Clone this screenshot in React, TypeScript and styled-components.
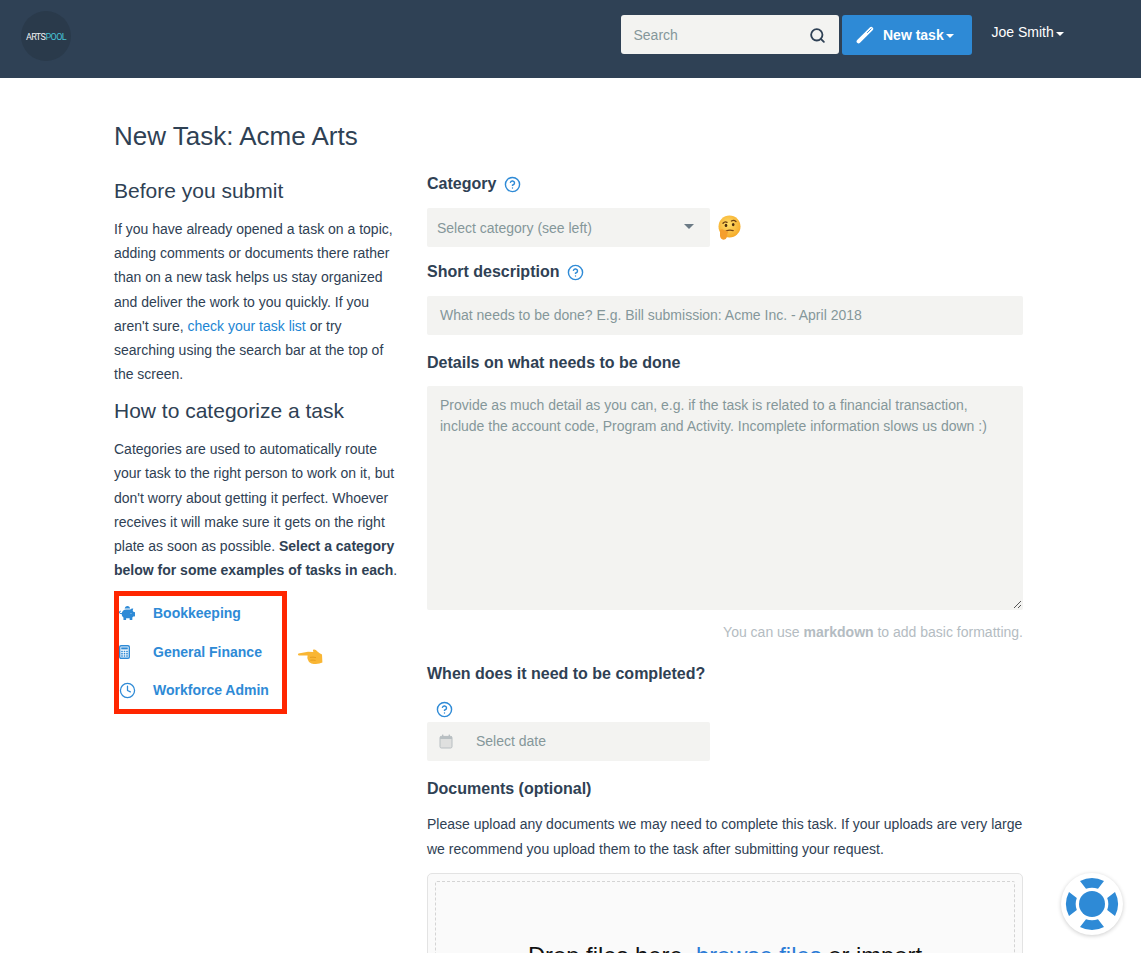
import React from "react";
import styled, { createGlobalStyle } from "styled-components";
import { CircleHelp, Clock, Search } from "lucide-react";
import { FaPiggyBank } from "react-icons/fa";

const Global = createGlobalStyle`
  html, body { margin: 0; padding: 0; height: 953px; overflow: hidden; background: #fff; }
  body { font-family: "Liberation Sans", Arial, sans-serif; color: #2f4154; font-size: 14px; }
  * { box-sizing: border-box; }
`;

const Page = styled.div`
  height: 953px;
  overflow: hidden;
`;

const Navbar = styled.header`
  height: 78px;
  background: #2f4155;
  display: flex;
  align-items: flex-start;
  padding: 11px 0 0 21px;
`;

const LogoMark = styled.div`
  width: 50px;
  height: 50px;
  border-radius: 50%;
  background: #2a3a4b;
  display: flex;
  align-items: center;
  justify-content: center;
  font-family: "Roboto", sans-serif;
  font-size: 9px;
  letter-spacing: -0.55px;
  color: #eef0f2;
  padding-top: 1px;
`;

const LogoAccent = styled.span`
  color: #48c3d6;
`;

const NavRight = styled.div`
  margin-left: auto;
  display: flex;
  align-items: flex-start;
  padding-top: 4px;
`;

const SearchBox = styled.div`
  width: 218px;
  height: 39px;
  background: #f3f3f1;
  border-radius: 3px;
  display: flex;
  align-items: center;
  justify-content: space-between;
  padding: 1px 13px 0 12.5px;
  color: #85979a;
  font-size: 14px;
  margin-right: 3px;
  svg { color: #2f4155; }
`;

const NewTask = styled.div`
  width: 130px;
  height: 40px;
  background: #2e8ad6;
  border-radius: 3px;
  display: flex;
  align-items: center;
  padding: 0 0 0 14px;
  color: #fff;
  font-weight: 700;
  font-size: 14px;
  svg { margin-right: 9px; }
`;

const Caret = styled.span`
  display: inline-block;
  width: 0;
  height: 0;
  margin-left: 2px;
  margin-top: 2px;
  border-left: 4.5px solid transparent;
  border-right: 4.5px solid transparent;
  border-top: 4px solid currentColor;
  vertical-align: middle;
`;

const UserMenu = styled.div`
  width: 169px;
  padding: 9px 0 0 19.5px;
  color: #fff;
  font-size: 14px;
  line-height: 16px;
`;

const Content = styled.main`
  padding: 0 118px 0 114px;
`;

const Title = styled.h1`
  margin: 0;
  padding-top: 43px;
  height: 94px;
  font-size: 26px;
  line-height: 30px;
  font-weight: 400;
  color: #2f4154;
`;

const Columns = styled.div`
  display: grid;
  grid-template-columns: 283px 596px;
  column-gap: 30px;
  align-items: start;
`;

const LeftColumn = styled.section`
  padding-top: 4px;
`;

const SectionHeading = styled.h3<{ $top?: number }>`
  margin: ${(p) => p.$top ?? 0}px 0 0;
  font-size: 21px;
  line-height: 30px;
  font-weight: 400;
  color: #2f4154;
`;

const Paragraph = styled.p`
  margin: 0;
  padding-top: 11px;
  font-size: 14px;
  line-height: 24.17px;
  color: #2f4154;
  width: 290px;
`;

const TextLink = styled.a`
  color: #1c85d3;
`;

const ListRow = styled.div`
  display: flex;
  align-items: center;
  width: fit-content;
  margin-top: 9px;
`;

const CategoryBox = styled.div`
  width: 173px;
  height: 123px;
  border: 5px solid #ff2600;
  display: flex;
  flex-direction: column;
  gap: 4.5px;
`;

const CategoryItem = styled.div`
  height: 34px;
  display: flex;
  align-items: center;
  color: #2e8ad6;
  font-weight: 700;
  font-size: 14px;
`;

const CategoryIcon = styled.span`
  width: 34px;
  display: flex;
  justify-content: flex-start;
  color: #2e8ad6;
`;

const PointHand = styled.span`
  margin-left: 10px;
  margin-top: 7px;
  display: flex;
`;

const RightColumn = styled.section`
  display: flex;
  flex-direction: column;
`;

const Label = styled.div<{ $top: number }>`
  display: flex;
  align-items: center;
  gap: 8px;
  font-size: 16px;
  font-weight: 700;
  line-height: 20px;
  color: #2f4154;
  margin-top: ${(p) => p.$top}px;
  svg { color: #2e8ad6; }
`;

const SelectRow = styled.div`
  display: flex;
  align-items: center;
  margin-top: 14px;
`;

const SelectField = styled.div`
  width: 283px;
  height: 39px;
  background: #f3f3f1;
  border-radius: 2px;
  display: flex;
  align-items: center;
  justify-content: space-between;
  padding: 0 16px 0 10px;
  color: #85979a;
  font-size: 14px;
  margin-right: 7px;
`;

const SelectCaret = styled.span`
  width: 0;
  height: 0;
  margin-top: -2px;
  border-left: 5px solid transparent;
  border-right: 5px solid transparent;
  border-top: 5px solid #6b7a85;
`;

const TextInput = styled.div`
  height: 39px;
  margin-top: 14px;
  background: #f3f3f1;
  border-radius: 2px;
  display: flex;
  align-items: center;
  padding: 0 13px 1px;
  color: #85979a;
  font-size: 14px;
`;

const TextArea = styled.div`
  position: relative;
  height: 224px;
  margin-top: 13px;
  background: #f3f3f1;
  border-radius: 2px;
  padding: 9px 13px;
  color: #85979a;
  font-size: 14px;
  line-height: 21px;
`;

const Grip = styled.svg`
  position: absolute;
  right: 1px;
  bottom: 1px;
`;

const Hint = styled.div`
  margin-top: 14px;
  line-height: 16px;
  text-align: right;
  font-size: 14px;
  color: #b4bcc2;
`;

const HelpRow = styled.div`
  height: 16px;
  margin-top: 17px;
  padding-left: 8.5px;
  display: flex;
  align-items: center;
  svg { color: #2e8ad6; }
`;

const DateField = styled.div`
  width: 283px;
  height: 39px;
  margin-top: 5px;
  background: #f3f3f1;
  border-radius: 2px;
  display: flex;
  align-items: center;
  padding: 0 0 1px 12px;
  color: #85979a;
  font-size: 14px;
  svg { margin-right: 23px; }
`;

const BodyText = styled.p`
  margin: 13px 0 0;
  font-size: 14px;
  line-height: 24.5px;
  color: #2f4154;
  white-space: nowrap;
`;

const DropOuter = styled.div`
  margin-top: 12px;
  height: 200px;
  background: #fafafa;
  border: 1px solid #e3e3e3;
  border-radius: 5px;
  padding: 7px;
`;

const DropInner = styled.div`
  height: 180px;
  border: 1px dashed #d4d4d4;
  border-radius: 2px;
  padding-top: 60px;
  text-align: center;
  font-size: 23.8px;
  line-height: 28px;
  color: #111;
  white-space: nowrap;
`;

const DropLink = styled.span`
  color: #2b7bd6;
`;

const HelpBeacon = styled.div`
  position: fixed;
  left: 1061px;
  top: 873px;
  width: 62px;
  height: 62px;
  border-radius: 50%;
  background: #fff;
  box-shadow: 0 1px 4px rgba(0, 0, 0, 0.2);
  display: flex;
  align-items: center;
  justify-content: center;
`;

const Help = () => <CircleHelp size={17} strokeWidth={2} />;

const ThinkingFace = () => (
  <svg width="24" height="26" viewBox="0 0 24 26">
    <defs>
      <radialGradient id="tf" cx="45%" cy="40%" r="65%">
        <stop offset="0%" stopColor="#ffdf6b" />
        <stop offset="100%" stopColor="#f5a623" />
      </radialGradient>
    </defs>
    <circle cx="12.5" cy="11.5" r="11" fill="url(#tf)" />
    <path d="M6 8.2 Q8 6 10 7.4M14.4 6 Q17 4.6 19 6.6" stroke="#6b3f12" strokeWidth="1.3" fill="none" strokeLinecap="round" />
    <ellipse cx="9" cy="10.4" rx="1.3" ry="1.7" fill="#4a2c0e" />
    <ellipse cx="16.2" cy="9.6" rx="1.3" ry="1.7" fill="#4a2c0e" />
    <path d="M9 16 Q12.5 14.4 16.2 15.6" stroke="#7a4514" strokeWidth="1.3" fill="none" strokeLinecap="round" />
    <path d="M3 15 Q5 13.4 7 15 L10.6 16.6 Q12 18 10.4 18.6 L10 22 Q8.8 25.4 5.6 24.6 Q2.6 23.4 3 19 Z" fill="#f59e2c" />
  </svg>
);

const PointingHand = () => (
  <svg width="26" height="18" viewBox="0 0 26 18">
    <path d="M1.4 6.4 Q0.2 7.8 1.8 8.4 L10.6 8.6 Q10 11 10.8 12.6 Q11.4 15.6 14.4 16.4 Q18.6 17.6 22.4 16.6 L25.4 15.4 L25 7.4 Q22.6 6.4 20.4 4.4 Q18.6 2 16.4 2.6 Q15.4 3.6 16.4 5 L11 4.8 Z" fill="#f9b634" />
    <path d="M13 10.4 Q16 9.8 19 10.6M13.4 13.2 Q16 12.8 18.6 13.4" stroke="#e39a1e" strokeWidth="0.9" fill="none" />
  </svg>
);

const PencilIcon = () => (
  <svg width="18" height="18" viewBox="0 0 18 18">
    <path d="M2.6 15.4 L15.2 2.8" stroke="#fff" strokeWidth="4" strokeLinecap="round" fill="none" />
    <path d="M11.4 6.6 L15.2 2.8" stroke="#2e8ad6" strokeWidth="0.9" strokeLinecap="round" fill="none" />
  </svg>
);

const CalculatorIcon = () => (
  <svg width="11" height="14" viewBox="0 0 11 14">
    <rect x="0.7" y="0.7" width="9.6" height="12.6" rx="1.3" fill="none" stroke="#2e8ad6" strokeWidth="1.4" />
    <rect x="2.2" y="2.4" width="6.6" height="2" fill="#2e8ad6" />
    <path d="M2.2 5.8h1.6v1.5H2.2zM4.7 5.8h1.6v1.5H4.7zM7.2 5.8h1.6v1.5H7.2zM2.2 8.1h1.6v1.5H2.2zM4.7 8.1h1.6v1.5H4.7zM7.2 8.1h1.6v1.5H7.2zM2.2 10.3h1.6v1.5H2.2zM4.7 10.3h1.6v1.5H4.7zM7.2 10.3h1.6v1.5H7.2z" fill="#2e8ad6" />
  </svg>
);

const CalendarIcon = () => (
  <svg width="14" height="15" viewBox="0 0 14 15">
    <rect x="1" y="2.4" width="12" height="11.6" rx="1.4" fill="#dfe0df" stroke="#b8bfc2" strokeWidth="1" />
    <rect x="1" y="2.4" width="12" height="2.6" fill="#b8bfc2" />
    <rect x="3" y="0.6" width="1.4" height="2.4" fill="#b8bfc2" />
    <rect x="9.6" y="0.6" width="1.4" height="2.4" fill="#b8bfc2" />
  </svg>
);

const segment = "M16 5 A26 26 0 0 1 40 5 L34 12.8 A17 17 0 0 0 22 12.8 Z";

const LifeBuoy = () => (
  <svg width="56" height="56" viewBox="0 0 56 56">
    <circle cx="28" cy="28" r="13" fill="#2e8ad6" />
    <path d={segment} fill="#2e8ad6" />
    <path d={segment} fill="#2e8ad6" transform="rotate(90 28 28)" />
    <path d={segment} fill="#2e8ad6" transform="rotate(180 28 28)" />
    <path d={segment} fill="#2e8ad6" transform="rotate(270 28 28)" />
  </svg>
);

export default function App() {
  return (
    <Page>
      <Global />
      <Navbar>
        <LogoMark>
          ARTS<LogoAccent>POOL</LogoAccent>
        </LogoMark>
        <NavRight>
          <SearchBox>
            Search
            <Search size={17} strokeWidth={2.6} />
          </SearchBox>
          <NewTask>
            <PencilIcon />
            New task
            <Caret />
          </NewTask>
          <UserMenu>
            Joe Smith
            <Caret />
          </UserMenu>
        </NavRight>
      </Navbar>
      <Content>
        <Title>New Task: Acme Arts</Title>
        <Columns>
          <LeftColumn>
            <SectionHeading>Before you submit</SectionHeading>
            <Paragraph>
              If you have already opened a task on a topic, adding comments or documents there rather
              than on a new task helps us stay organized and deliver the work to you quickly. If you
              aren't sure, <TextLink>check your task list</TextLink> or try searching using the search
              bar at the top of the screen.
            </Paragraph>
            <SectionHeading $top={10}>How to categorize a task</SectionHeading>
            <Paragraph>
              Categories are used to automatically route your task to the right person to work on it,
              but don't worry about getting it perfect. Whoever receives it will make sure it gets on
              the right plate as soon as possible.{" "}
              <strong>Select a category below for some examples of tasks in each</strong>.
            </Paragraph>
            <ListRow>
              <CategoryBox>
                <CategoryItem>
                  <CategoryIcon>
                    <FaPiggyBank size={16} />
                  </CategoryIcon>
                  Bookkeeping
                </CategoryItem>
                <CategoryItem>
                  <CategoryIcon>
                    <CalculatorIcon />
                  </CategoryIcon>
                  General Finance
                </CategoryItem>
                <CategoryItem>
                  <CategoryIcon>
                    <Clock size={17} strokeWidth={1.8} />
                  </CategoryIcon>
                  Workforce Admin
                </CategoryItem>
              </CategoryBox>
              <PointHand>
                <PointingHand />
              </PointHand>
            </ListRow>
          </LeftColumn>
          <RightColumn>
            <Label $top={2}>
              Category <Help />
            </Label>
            <SelectRow>
              <SelectField>
                Select category (see left)
                <SelectCaret />
              </SelectField>
              <ThinkingFace />
            </SelectRow>
            <Label $top={15}>
              Short description <Help />
            </Label>
            <TextInput>What needs to be done? E.g. Bill submission: Acme Inc. - April 2018</TextInput>
            <Label $top={18}>Details on what needs to be done</Label>
            <TextArea>
              Provide as much detail as you can, e.g. if the task is related to a financial transaction,
              <br />
              include the account code, Program and Activity. Incomplete information slows us down :)
              <Grip width="9" height="9" viewBox="0 0 9 9">
                <path d="M1 8 L8 1 M5 8 L8 5" stroke="#555" strokeWidth="1" />
              </Grip>
            </TextArea>
            <Hint>
              You can use <strong>markdown</strong> to add basic formatting.
            </Hint>
            <Label $top={24}>When does it need to be completed?</Label>
            <HelpRow>
              <Help />
            </HelpRow>
            <DateField>
              <CalendarIcon />
              Select date
            </DateField>
            <Label $top={18}>Documents (optional)</Label>
            <BodyText>
              Please upload any documents we may need to complete this task. If your uploads are very large
              <br />
              we recommend you upload them to the task after submitting your request.
            </BodyText>
            <DropOuter>
              <DropInner>
                Drop files here, <DropLink>browse files</DropLink> or import
              </DropInner>
            </DropOuter>
          </RightColumn>
        </Columns>
      </Content>
      <HelpBeacon>
        <LifeBuoy />
      </HelpBeacon>
    </Page>
  );
}
